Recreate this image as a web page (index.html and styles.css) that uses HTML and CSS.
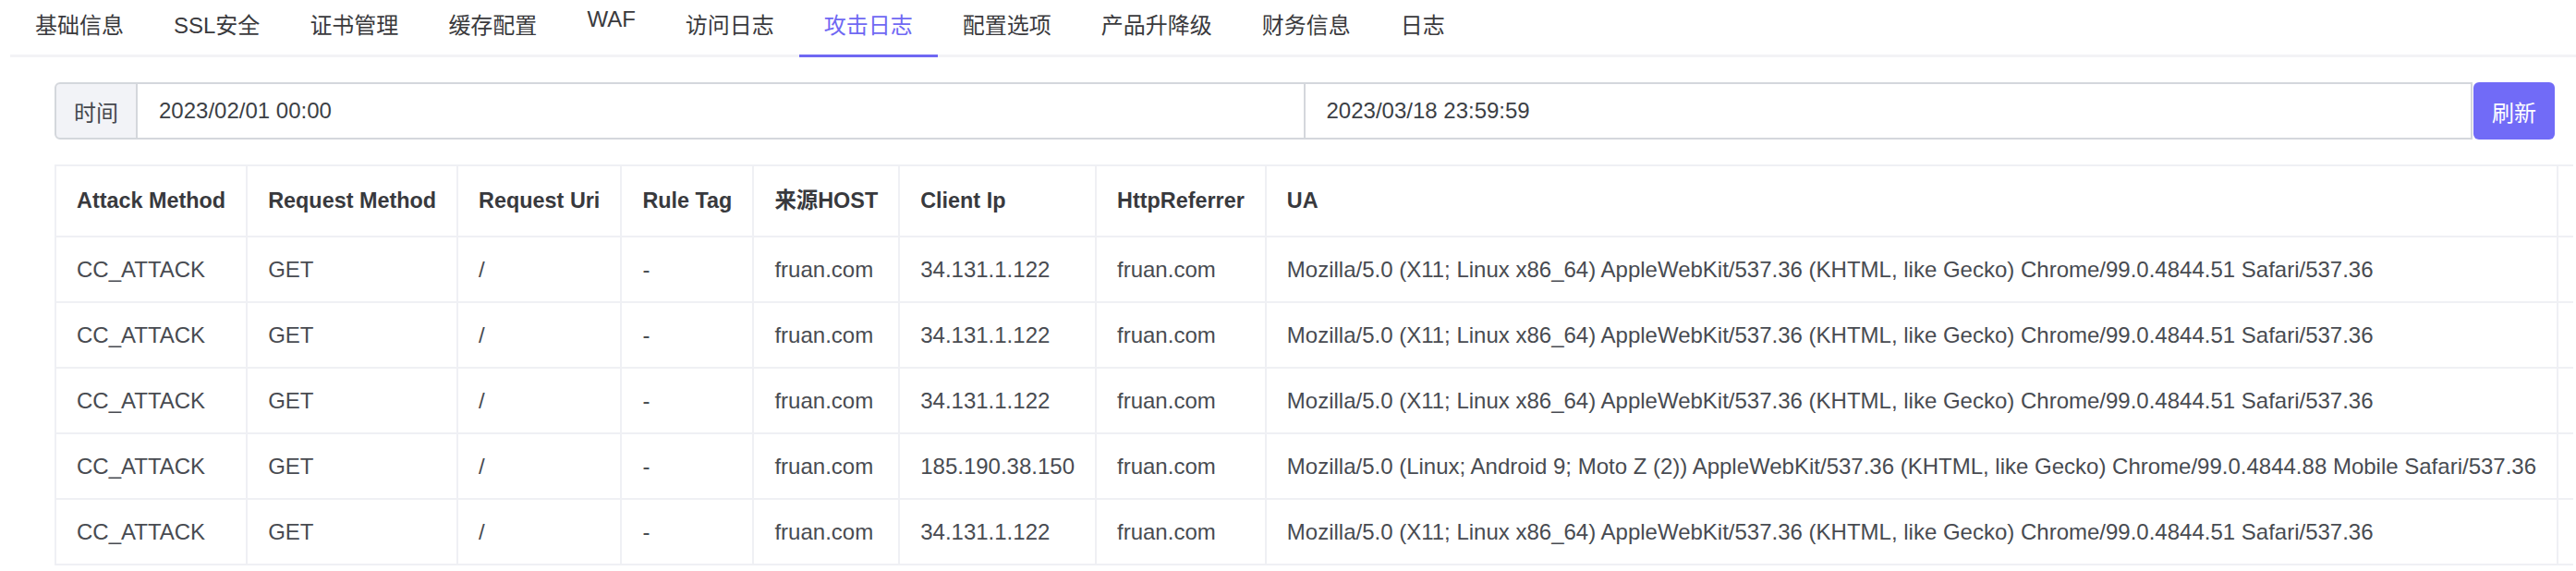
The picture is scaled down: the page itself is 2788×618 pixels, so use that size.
FILE: index.html
```html
<!DOCTYPE html>
<html>
<head>
    <meta charset="utf-8">
    <title>攻击日志</title>
    <link rel="stylesheet" href="styles.css">
</head>
<body>
    <div class="tabs">
        <div class="tab">基础信息</div>
        <div class="tab">SSL安全</div>
        <div class="tab">证书管理</div>
        <div class="tab">缓存配置</div>
        <div class="tab tab-latin">WAF</div>
        <div class="tab">访问日志</div>
        <div class="tab active">攻击日志</div>
        <div class="tab">配置选项</div>
        <div class="tab">产品升降级</div>
        <div class="tab">财务信息</div>
        <div class="tab">日志</div>
    </div>

    <div class="panel">
        <div class="time-range">
            <div class="addon">时间</div>
            <div class="date-field">2023/02/01 00:00</div>
            <div class="date-field">2023/03/18 23:59:59</div>
            <button class="btn-refresh">刷新</button>
        </div>

        <div class="table-wrap">
            <table class="log-table">
                <thead>
                    <tr>
                        <th>Attack Method</th>
                        <th>Request Method</th>
                        <th>Request Uri</th>
                        <th>Rule Tag</th>
                        <th>来源HOST</th>
                        <th>Client Ip</th>
                        <th>HttpReferrer</th>
                        <th>UA</th>
                        <th class="col-more"></th>
                    </tr>
                </thead>
                <tbody>
                    <tr>
                        <td>CC_ATTACK</td>
                        <td>GET</td>
                        <td>/</td>
                        <td>-</td>
                        <td>fruan.com</td>
                        <td>34.131.1.122</td>
                        <td>fruan.com</td>
                        <td>Mozilla/5.0 (X11; Linux x86_64) AppleWebKit/537.36 (KHTML, like Gecko) Chrome/99.0.4844.51 Safari/537.36</td>
                        <td class="col-more"></td>
                    </tr>
                    <tr>
                        <td>CC_ATTACK</td>
                        <td>GET</td>
                        <td>/</td>
                        <td>-</td>
                        <td>fruan.com</td>
                        <td>34.131.1.122</td>
                        <td>fruan.com</td>
                        <td>Mozilla/5.0 (X11; Linux x86_64) AppleWebKit/537.36 (KHTML, like Gecko) Chrome/99.0.4844.51 Safari/537.36</td>
                        <td class="col-more"></td>
                    </tr>
                    <tr>
                        <td>CC_ATTACK</td>
                        <td>GET</td>
                        <td>/</td>
                        <td>-</td>
                        <td>fruan.com</td>
                        <td>34.131.1.122</td>
                        <td>fruan.com</td>
                        <td>Mozilla/5.0 (X11; Linux x86_64) AppleWebKit/537.36 (KHTML, like Gecko) Chrome/99.0.4844.51 Safari/537.36</td>
                        <td class="col-more"></td>
                    </tr>
                    <tr>
                        <td>CC_ATTACK</td>
                        <td>GET</td>
                        <td>/</td>
                        <td>-</td>
                        <td>fruan.com</td>
                        <td>185.190.38.150</td>
                        <td>fruan.com</td>
                        <td>Mozilla/5.0 (Linux; Android 9; Moto Z (2)) AppleWebKit/537.36 (KHTML, like Gecko) Chrome/99.0.4844.88 Mobile Safari/537.36</td>
                        <td class="col-more"></td>
                    </tr>
                    <tr>
                        <td>CC_ATTACK</td>
                        <td>GET</td>
                        <td>/</td>
                        <td>-</td>
                        <td>fruan.com</td>
                        <td>34.131.1.122</td>
                        <td>fruan.com</td>
                        <td>Mozilla/5.0 (X11; Linux x86_64) AppleWebKit/537.36 (KHTML, like Gecko) Chrome/99.0.4844.51 Safari/537.36</td>
                        <td class="col-more"></td>
                    </tr>
                </tbody>
            </table>
        </div>
    </div>
</body>
</html>
```

FILE: styles.css
```css
html, body {
    margin: 0;
    overflow: hidden;
}
body {
    font-family: "Liberation Sans", "Noto Sans CJK SC", sans-serif;
    font-size: 24px;
    color: #3d3f44;
    background: #ffffff;
}

/* top tab bar */
.tabs {
    display: flex;
    margin-left: 11px;
    border-bottom: 3px solid #f3f3f6;
}
.tab {
    display: flex;
    align-items: center;
    box-sizing: border-box;
    height: 62px;
    padding: 0 27px 3px;
    margin-bottom: -3px;
    border-bottom: 3px solid transparent;
    line-height: 30px;
    color: #3a3a3d;
    white-space: nowrap;
}
.tab-latin {
    padding-bottom: 17px; /* latin-only label sits higher */
}
.tab.active {
    color: #6f68f3;
    border-bottom-color: #6f68f3;
}

.panel {
    padding: 27px 23px 0 59px;
}

/* time range filter */
.time-range {
    display: flex;
    height: 62px;
}
.addon {
    display: flex;
    align-items: center;
    padding: 0 19px;
    background-color: #f2f3f7;
    border: 2px solid #d4d7dc;
    border-radius: 6px 0 0 6px;
    color: #45484e;
}
.date-field {
    flex: 1;
    display: flex;
    align-items: center;
    padding-left: 23px;
    border: 2px solid #d4d7dc;
    border-left: none;
    color: #3c3f45;
}
.btn-refresh {
    width: 88px;
    margin-left: 1px;
    border: none;
    border-radius: 6px;
    background-color: #716bf7;
    color: #ffffff;
    font-family: inherit;
    font-size: 24px;
    padding: 0;
}

/* attack log table */
.table-wrap {
    margin-top: 27px;
    margin-right: -20px;
    overflow: hidden;
}
.log-table {
    border-collapse: collapse;
    border: 2px solid #eff0f4;
    white-space: nowrap;
}
.log-table th,
.log-table td {
    border: 2px solid #eff0f4;
    text-align: left;
    line-height: 29px;
    padding: 20px 22px;
}
.log-table th {
    padding-top: 23px;
    padding-bottom: 23px;
    font-size: 23.4px;
    font-weight: bold;
    color: #38393d;
}
.log-table td {
    color: #484b51;
}
.log-table .col-more {
    width: 300px;
}
```
